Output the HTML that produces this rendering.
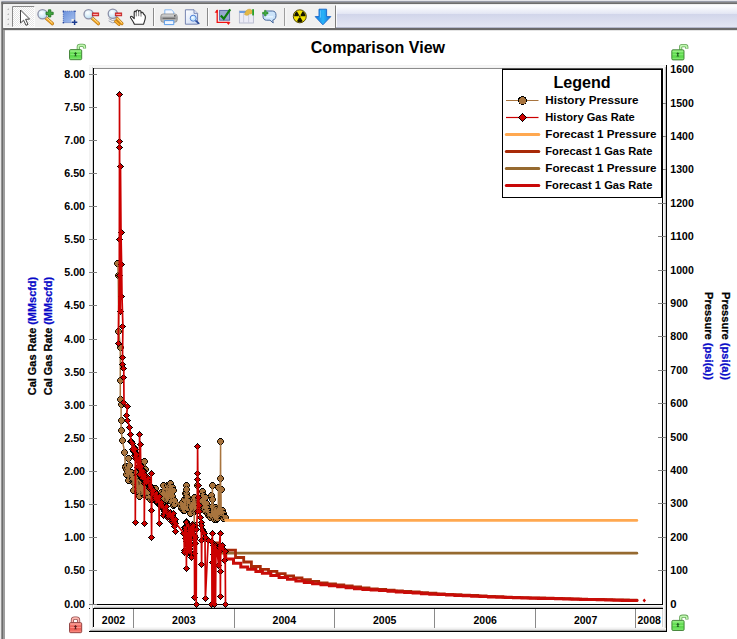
<!DOCTYPE html>
<html><head><meta charset="utf-8"><title>Comparison View</title>
<style>
html,body{margin:0;padding:0;background:#fff;}
body{width:737px;height:639px;overflow:hidden;font-family:"Liberation Sans",sans-serif;}
svg{display:block;position:absolute;left:0;top:0}
text{font-family:"Liberation Sans",sans-serif;font-weight:bold;}
</style></head><body>
<svg width="737" height="639" viewBox="0 0 737 639">
<defs>
<symbol id="mb" width="7" height="7" viewBox="0 0 7 7" shape-rendering="crispEdges">
<path d="M2,0h3v1h1v1h1v3h-1v1h-1v1h-3v-1h-1v-1h-1v-3h1v-1h1z" fill="#A8743E"/>
<path d="M2,0h3v1h-3z M2,6h3v1h-3z M1,1h1v1h-1z M5,1h1v1h-1z M1,5h1v1h-1z M5,5h1v1h-1z M0,3h1v1h-1z M6,3h1v1h-1z" fill="#000"/>
<path d="M0,2h1v1h-1z M0,4h1v1h-1z M6,2h1v1h-1z M6,4h1v1h-1z" fill="#5a3c1c"/>
</symbol>
<symbol id="mr" width="7" height="7" viewBox="0 0 7 7" shape-rendering="crispEdges">
<path d="M3,0h1v1h1v1h1v1h1v1h-1v1h-1v1h-1v1h-1v-1h-1v-1h-1v-1h-1v-1h1v-1h1v-1h1z" fill="#000"/>
<path d="M3,1h1v1h1v1h1v1h-1v1h-1v1h-1v-1h-1v-1h-1v-1h1v-1h1z" fill="#CC0000"/>
</symbol>
<linearGradient id="tbg" x1="0" y1="0" x2="0" y2="1"><stop offset="0" stop-color="#E9ECF6"/><stop offset="1" stop-color="#D3D8EA"/></linearGradient>
<linearGradient id="lockg" x1="0" y1="0" x2="0" y2="1"><stop offset="0" stop-color="#88EC76"/><stop offset="0.5" stop-color="#58D848"/><stop offset="1" stop-color="#6CE05C"/></linearGradient>
<linearGradient id="lockr" x1="0" y1="0" x2="0" y2="1"><stop offset="0" stop-color="#F89088"/><stop offset="0.5" stop-color="#EC5C52"/><stop offset="1" stop-color="#F27268"/></linearGradient>
</defs>
<rect width="737" height="639" fill="#fff"/>
<!-- window chrome -->
<rect x="0" y="0" width="737" height="1" fill="#E4E4E8"/>
<rect x="0" y="1" width="737" height="1.2" fill="#979BA8"/>
<rect x="1.3" y="2.2" width="736" height="2.1" fill="#6C6C6C"/>
<rect x="3.1" y="4.3" width="734" height="1" fill="#FCFCFC"/>
<rect x="4.9" y="5.2" width="733" height="21.8" fill="#F0F0F0"/>
<rect x="336" y="5.2" width="401" height="21.8" fill="url(#tbg)"/>
<rect x="3.1" y="27" width="734" height="1" fill="#FAFAFA"/>
<rect x="336" y="27" width="401" height="1" fill="#B4B8CC"/>
<rect x="3.1" y="28" width="734" height="2" fill="#6A6A6A"/>
<rect x="4.9" y="30" width="733" height="0.7" fill="#d8d8d8"/>
<rect x="0" y="0" width="1.3" height="639" fill="#E8E8E8"/>
<rect x="1.3" y="2" width="1.8" height="637" fill="#6C6C6C"/>
<rect x="3.1" y="30" width="1.8" height="609" fill="#949494"/>
<rect x="3.1" y="5" width="1.8" height="22" fill="#F4F4F4"/>

<defs>
<linearGradient id="tbg2" x1="0" y1="0" x2="0" y2="1"><stop offset="0" stop-color="#ffffff"/><stop offset="0.38" stop-color="#E4E7F4"/><stop offset="0.40" stop-color="#D1D5EA"/><stop offset="1" stop-color="#E3E6F3"/></linearGradient>
<radialGradient id="lens" cx="0.4" cy="0.35" r="0.7"><stop offset="0" stop-color="#ffffff"/><stop offset="0.6" stop-color="#D4ECF8"/><stop offset="1" stop-color="#B4D4F0"/></radialGradient>
<linearGradient id="hnd" x1="0" y1="0" x2="1" y2="0"><stop offset="0" stop-color="#FFE0A0"/><stop offset="1" stop-color="#E89010"/></linearGradient>
<linearGradient id="selg" x1="0" y1="0" x2="1" y2="1"><stop offset="0" stop-color="#6A90DC"/><stop offset="1" stop-color="#A8C2EE"/></linearGradient>
<linearGradient id="arr" x1="0" y1="0" x2="1" y2="0"><stop offset="0" stop-color="#1478E0"/><stop offset="0.5" stop-color="#28B4F8"/><stop offset="1" stop-color="#1070D8"/></linearGradient>
<linearGradient id="prn" x1="0" y1="0" x2="0" y2="1"><stop offset="0" stop-color="#e2e2e2"/><stop offset="0.5" stop-color="#a4a4a4"/><stop offset="1" stop-color="#cacaca"/></linearGradient>
<linearGradient id="pg" x1="0" y1="0" x2="1" y2="1"><stop offset="0" stop-color="#ffffff"/><stop offset="1" stop-color="#C8D8F4"/></linearGradient>
<pattern id="chk" width="2" height="2" patternUnits="userSpaceOnUse"><rect width="2" height="2" fill="#fff"/><rect width="1" height="1" fill="#E4E4E4"/><rect x="1" y="1" width="1" height="1" fill="#E4E4E4"/></pattern>
</defs>
<rect x="336" y="5.2" width="401" height="21.8" fill="url(#tbg2)"/><rect x="336" y="27" width="401" height="1" fill="#B4B8CC"/><rect x="336" y="5.2" width="1" height="21.8" fill="#fff" opacity="0.8"/>
<rect x="335" y="5.5" width="1" height="22.5" fill="#7c7c7c"/>
<!-- grip -->
<g fill="#b8b8b8"><path d="M7,10 l2,-2 v2z M7,15 l2,-2 v2z M7,20 l2,-2 v2z M7,25 l2,-2 v2z"/></g>
<!-- selected cursor button -->
<rect x="12.5" y="6.5" width="22" height="20.5" fill="url(#chk)"/>
<path d="M12.5,27 V6.5 H34.5" stroke="#8a8a8a" stroke-width="1" fill="none"/>
<path d="M34.5,6.5 V27 H12.5" stroke="#fafafa" stroke-width="1" fill="none"/>
<path d="M20.5,10 V23 L23.6,20.2 L26,25.3 L28,24.4 L25.6,19.3 L29.6,19.1 Z" fill="#fff" stroke="#3a3a3a" stroke-width="0.95" stroke-linejoin="miter"/>
<!-- zoom in -->
<g>
<path d="M46,18 L52.3,23.6" stroke="#B87410" stroke-width="3.4" stroke-linecap="round"/>
<path d="M46,18 L52.3,23.6" stroke="#F8B030" stroke-width="2" stroke-linecap="round"/>
<path d="M46.6,17.8 L52,22.6" stroke="#FFE8B0" stroke-width="0.8" stroke-linecap="round"/>
<circle cx="42.5" cy="14.3" r="4.6" fill="url(#lens)" stroke="#8C90A8" stroke-width="1.3"/>
<path d="M48.4,9.8 h2.4 v2.4 h2.4 v2.4 h-2.4 v2.4 h-2.4 v-2.4 h-2.4 v-2.4 h2.4z" fill="#3FA83F" stroke="#1C6E1C" stroke-width="0.8"/>
</g>
<!-- rect select -->
<g>
<path d="M63.3,11.2 H75 V19 H71.5 V22.6 H63.3 Z" fill="url(#selg)"/>
<path d="M63.3,11.2 H75 V19 M71.5,22.6 H63.3 V11.2" fill="none" stroke="#3458B0" stroke-width="0.9" stroke-dasharray="1 1"/>
<g fill="#2848A0"><rect x="62.7" y="10.6" width="1.4" height="1.4"/><rect x="74.3" y="10.6" width="1.4" height="1.4"/><rect x="62.7" y="22" width="1.4" height="1.4"/></g>
<path d="M74.6,19.6 V25 M71.9,22.3 H77.3" stroke="#1C3C90" stroke-width="1.5" fill="none"/>
</g>
<!-- zoom out -->
<g>
<path d="M92,18 L98.3,23.6" stroke="#B87410" stroke-width="3.4" stroke-linecap="round"/>
<path d="M92,18 L98.3,23.6" stroke="#F8B030" stroke-width="2" stroke-linecap="round"/>
<path d="M92.6,17.8 L98,22.6" stroke="#FFE8B0" stroke-width="0.8" stroke-linecap="round"/>
<circle cx="88.6" cy="14.2" r="4.6" fill="url(#lens)" stroke="#8C90A8" stroke-width="1.3"/>
<rect x="92.2" y="12.9" width="6.6" height="3" fill="#E83838" stroke="#B01818" stroke-width="0.6"/>
<rect x="93.2" y="14" width="4.6" height="0.8" fill="#FFD0D0"/>
</g>
<!-- zoom layers -->
<g>
<path d="M108.6,18.5 q3.6,3.4 8,1.2 M108.6,20.8 q3.6,3.4 8,1.2" stroke="#A0A4B4" stroke-width="1" fill="none"/>
<path d="M117,18.4 L122,23.6 M115.6,21.4 L119,24.4" stroke="#B87410" stroke-width="3" stroke-linecap="round"/>
<path d="M117,18.4 L122,23.6 M115.6,21.4 L119,24.4" stroke="#F8B030" stroke-width="1.8" stroke-linecap="round"/>
<path d="M117.5,18.2 L121.8,22.8" stroke="#FFE8B0" stroke-width="0.7" stroke-linecap="round"/>
<circle cx="112.8" cy="13.8" r="4.6" fill="url(#lens)" stroke="#8C90A8" stroke-width="1.3"/>
<rect x="115.2" y="12.9" width="6.6" height="3" fill="#E83838" stroke="#B01818" stroke-width="0.6"/>
<rect x="116.2" y="14" width="4.6" height="0.8" fill="#FFD0D0"/>
</g>
<!-- hand -->
<path d="M134.4,24.2 C133.4,21.6 131.6,19.6 130.6,17.8 C130,16.6 131.2,15.8 132.2,16.6 L134.2,18.6 V12.2 C134.2,10.8 136,10.8 136.2,12.2 V11 C136.4,9.6 138.4,9.6 138.6,11 V11.6 C138.8,10.2 140.8,10.2 141,11.8 V13 C141.4,11.8 143.2,12 143.2,13.6 C143.6,14.4 145.4,14.6 145.4,17 C145.4,20 144.2,21.6 143.6,24.2 Z" fill="#fff" stroke="#2a2a2a" stroke-width="1.1" stroke-linejoin="round"/>
<path d="M136.3,12.4 V16.4 M138.7,11.4 V16.2 M141,12.6 V16.6" stroke="#555" stroke-width="0.8" fill="none"/>
<!-- separators -->
<g fill="#8a8a8a"><rect x="153" y="8" width="1" height="18"/><rect x="207" y="8" width="1" height="18"/><rect x="284.2" y="8" width="1" height="18"/></g>
<g fill="#fdfdfd"><rect x="154" y="8" width="1" height="18"/><rect x="208" y="8" width="1" height="18"/><rect x="285.2" y="8" width="1" height="18"/></g>
<!-- printer -->
<g>
<path d="M164.8,14.5 V9.8 H171.4 L173.8,12 V14.5 Z" fill="#F4F8FF" stroke="#6CA8EC" stroke-width="0.8"/>
<rect x="160.8" y="14" width="16.4" height="8.2" rx="2.4" fill="url(#prn)" stroke="#808080" stroke-width="0.8"/>
<rect x="162.6" y="17.6" width="12.8" height="1.5" fill="#6e6e6e"/>
<rect x="174.2" y="15.2" width="1.3" height="1.3" fill="#222"/>
<path d="M164.4,20.6 H173.8 V24.6 H164.4 Z" fill="#F0F6FF" stroke="#4C94E8" stroke-width="0.9"/>
</g>
<!-- preview -->
<g>
<path d="M185.4,9.8 H194 L197.6,13.4 V24.2 H185.4 Z" fill="url(#pg)" stroke="#6878A8" stroke-width="0.9"/>
<path d="M194,9.8 V13.4 H197.6" fill="#E0E8F8" stroke="#6878A8" stroke-width="0.8"/>
<path d="M195.6,20.6 L198.8,23.4" stroke="#2C4C9C" stroke-width="1.6" stroke-linecap="round"/>
<circle cx="193.2" cy="18.2" r="3" fill="#C8E8FE" stroke="#5080D4" stroke-width="1"/>
<circle cx="192.6" cy="17.6" r="1.2" fill="#fff" opacity="0.8"/>
</g>
<!-- check chart -->
<g>
<rect x="219.6" y="10.4" width="10" height="9.8" fill="#98A8D0" stroke="#5464A4" stroke-width="0.9"/>
<path d="M217.2,10 V22.4 H229.4" stroke="#F01010" stroke-width="1.3" fill="none"/>
<path d="M215.2,12.4 L217.2,9.8 V12.4 Z M226.8,22.4 H230 L228.4,24.6 Z" fill="#F01010" stroke="#F01010" stroke-width="0.6"/>
<path d="M220.8,15.4 L223.8,18.8 L230.2,9.4" stroke="#0C7C0C" stroke-width="2.2" fill="none"/>
</g>
<!-- chart window -->
<g>
<rect x="239.4" y="11" width="14" height="12" fill="#ECECF6" stroke="#B4B8CC" stroke-width="0.9"/>
<rect x="239.4" y="11" width="7" height="2" fill="#6C9CE0"/>
<path d="M243.6,13 V23 M248.6,13 V23" stroke="#CACCDC" stroke-width="0.9"/>
<path d="M244.6,14.6 C245,11.6 246.6,9.4 249,9.2 C251,9 252.4,10.2 252.4,12 C252.4,13.6 251,14.2 249.6,13.8 C248.6,15.4 246.4,15.8 244.6,14.6Z" fill="#E4B848" stroke="#C89828" stroke-width="0.5"/>
<rect x="252.2" y="9.2" width="1.8" height="6.2" fill="#28A028"/>
</g>
<!-- comment -->
<g>
<path d="M266.6,11 H272.4 C274.8,11 276,12.6 276,15.4 C276,18.2 274.8,19.8 272.8,20 L273.2,23 L270,20.2 H266.4 C264.2,20.2 263,18.6 263,16 V14 Z" fill="#CCE4FA" stroke="#4A6A9C" stroke-width="1"/>
<path d="M266,16.8 H273" stroke="#E8F4FF" stroke-width="1.4"/>
<path d="M264.5,10.4 h1.6 v1.9 h1.9 v1.6 h-1.9 v1.9 h-1.6 v-1.9 h-1.9 v-1.6 h1.9z" fill="#44B044" stroke="#1C7C1C" stroke-width="0.6"/>
</g>
<!-- radiation -->
<g>
<circle cx="299.8" cy="16.3" r="6.5" fill="#F4E400" stroke="#54480C" stroke-width="1"/>
<g fill="#141400">
<path d="M299.8,16.3 L302.7,11.28 A5.8,5.8 0 0 1 305.6,16.3 Z"/>
<path d="M299.8,16.3 L302.7,21.32 A5.8,5.8 0 0 1 296.9,21.32 Z"/>
<path d="M299.8,16.3 L294,16.3 A5.8,5.8 0 0 1 296.9,11.28 Z"/>
</g>
<circle cx="299.8" cy="16.3" r="1.3" fill="#F4E400"/>
<circle cx="299.8" cy="16.3" r="0.7" fill="#141400"/>
</g>
<!-- down arrow -->
<path d="M319,9.2 H326.6 V16.6 H330.8 L322.9,24.8 L315.2,16.6 H319 Z" fill="url(#arr)" stroke="#1464C8" stroke-width="0.9" stroke-linejoin="round"/>
<path d="M320.4,10.4 V17.6" stroke="#70D0FF" stroke-width="1" opacity="0.8"/>

<g transform="translate(69.1,49.2)">
<path d="M9.2,0.3 V-2.2 C9.2,-3.3 10,-3.8 11,-3.8 H13.7 C14.9,-3.8 15.4,-3.2 15.4,-2.1 V-0.6" fill="none" stroke="#64A458" stroke-width="3.2" stroke-linejoin="round"/>
<path d="M9.2,0.3 V-2.2 C9.2,-3.3 10,-3.8 11,-3.8 H13.7 C14.9,-3.8 15.4,-3.2 15.4,-2.1 V-1" fill="none" stroke="#C0F8B0" stroke-width="1.6" stroke-linejoin="round"/>
<rect x="0.4" y="0.4" width="12.2" height="10.1" rx="1.2" fill="url(#lockg)" stroke="#3C7C32" stroke-width="0.9"/>
<rect x="1.2" y="1.4" width="10.6" height="1" fill="#A4F494" opacity="0.8"/>
<rect x="1.2" y="4.9" width="10.6" height="0.9" fill="#98F088" opacity="0.8"/>
<rect x="1.2" y="8.6" width="10.6" height="0.9" fill="#8CEC7C" opacity="0.7"/>
<path d="M6.4,2.8 L8.1,4.7 H7 V6.2 L7.9,7 H4.9 L5.8,6.2 V4.7 H4.7 Z" fill="#1E5A1E"/>
</g>
<g transform="translate(671.4,49.4)">
<path d="M9.2,0.3 V-2.2 C9.2,-3.3 10,-3.8 11,-3.8 H13.7 C14.9,-3.8 15.4,-3.2 15.4,-2.1 V-0.6" fill="none" stroke="#64A458" stroke-width="3.2" stroke-linejoin="round"/>
<path d="M9.2,0.3 V-2.2 C9.2,-3.3 10,-3.8 11,-3.8 H13.7 C14.9,-3.8 15.4,-3.2 15.4,-2.1 V-1" fill="none" stroke="#C0F8B0" stroke-width="1.6" stroke-linejoin="round"/>
<rect x="0.4" y="0.4" width="12.2" height="10.1" rx="1.2" fill="url(#lockg)" stroke="#3C7C32" stroke-width="0.9"/>
<rect x="1.2" y="1.4" width="10.6" height="1" fill="#A4F494" opacity="0.8"/>
<rect x="1.2" y="4.9" width="10.6" height="0.9" fill="#98F088" opacity="0.8"/>
<rect x="1.2" y="8.6" width="10.6" height="0.9" fill="#8CEC7C" opacity="0.7"/>
<path d="M6.4,2.8 L8.1,4.7 H7 V6.2 L7.9,7 H4.9 L5.8,6.2 V4.7 H4.7 Z" fill="#1E5A1E"/>
</g>
<g transform="translate(671.5,620)">
<path d="M9.2,0.3 V-2.2 C9.2,-3.3 10,-3.8 11,-3.8 H13.7 C14.9,-3.8 15.4,-3.2 15.4,-2.1 V-0.6" fill="none" stroke="#64A458" stroke-width="3.2" stroke-linejoin="round"/>
<path d="M9.2,0.3 V-2.2 C9.2,-3.3 10,-3.8 11,-3.8 H13.7 C14.9,-3.8 15.4,-3.2 15.4,-2.1 V-1" fill="none" stroke="#C0F8B0" stroke-width="1.6" stroke-linejoin="round"/>
<rect x="0.4" y="0.4" width="12.2" height="10.1" rx="1.2" fill="url(#lockg)" stroke="#3C7C32" stroke-width="0.9"/>
<rect x="1.2" y="1.4" width="10.6" height="1" fill="#A4F494" opacity="0.8"/>
<rect x="1.2" y="4.9" width="10.6" height="0.9" fill="#98F088" opacity="0.8"/>
<rect x="1.2" y="8.6" width="10.6" height="0.9" fill="#8CEC7C" opacity="0.7"/>
<path d="M6.4,2.8 L8.1,4.7 H7 V6.2 L7.9,7 H4.9 L5.8,6.2 V4.7 H4.7 Z" fill="#1E5A1E"/>
</g>
<g transform="translate(69.1,622.2)">
<path d="M3.3,0.4 V-2 C3.3,-3.6 4.2,-4.1 5.4,-4.1 H7.4 C8.6,-4.1 9.5,-3.6 9.5,-2 V0.4" fill="none" stroke="#945050" stroke-width="3.2" stroke-linejoin="round"/>
<path d="M3.3,0.4 V-2 C3.3,-3.6 4.2,-4.1 5.4,-4.1 H7.4 C8.6,-4.1 9.5,-3.6 9.5,-2 V0.4" fill="none" stroke="#FFB8B0" stroke-width="1.6" stroke-linejoin="round"/>
<rect x="0.4" y="0.4" width="12.2" height="10.1" rx="1.2" fill="url(#lockr)" stroke="#8A3C3C" stroke-width="0.9"/>
<rect x="1.2" y="1.4" width="10.6" height="1" fill="#FFB0A8" opacity="0.8"/>
<rect x="1.2" y="4.9" width="10.6" height="0.9" fill="#FFA49C" opacity="0.8"/>
<rect x="1.2" y="8.6" width="10.6" height="0.9" fill="#FF9C94" opacity="0.7"/>
<path d="M6.4,2.8 L8.1,4.7 H7 V6.2 L7.9,7 H4.9 L5.8,6.2 V4.7 H4.7 Z" fill="#5A1E1E"/>
</g>
<text x="377.9" y="52.5" font-size="15.8" text-anchor="middle" fill="#000" textLength="134.3" lengthAdjust="spacingAndGlyphs">Comparison View</text>
<rect x="89" y="65" width="1" height="566" fill="#F2F2F2"/><rect x="90" y="65" width="1" height="566" fill="#F6F6F6"/><rect x="91" y="65" width="1" height="566" fill="#FAFAFA"/><rect x="92" y="65" width="1" height="563" fill="#D0D0D0"/>
<rect x="89" y="65" width="577" height="1" fill="#F3F3F3"/><rect x="89" y="66" width="577" height="1" fill="#F7F7F7"/><rect x="94" y="67" width="568" height="1" fill="#F2F2F2"/>
<rect x="663" y="67" width="1" height="563" fill="#FCFCFC"/><rect x="664" y="67" width="1" height="563" fill="#EEEEEE"/><rect x="665" y="67" width="1" height="563" fill="#C4C4C4"/>
<rect x="94" y="605" width="569" height="1" fill="#F6F6F6"/><rect x="94" y="606" width="569" height="1" fill="#E6E6E6"/><rect x="94" y="607" width="569" height="1" fill="#B4B4B4"/>
<rect x="93" y="68" width="570" height="1" fill="#8c8c8c"/>
<rect x="93" y="68" width="1" height="537" fill="#000"/>
<rect x="93" y="604" width="570" height="1" fill="#000"/>
<rect x="662" y="68" width="1" height="537" fill="#000"/>
<rect x="666" y="65" width="1" height="567" fill="#000"/>
<rect x="89" y="604" width="8" height="1" fill="#808080"/>
<text x="85.1" y="608.1" font-size="11.3" text-anchor="end" fill="#000" textLength="20.9" lengthAdjust="spacingAndGlyphs">0.00</text>
<rect x="89" y="570" width="8" height="1" fill="#808080"/>
<text x="85.1" y="574.1" font-size="11.3" text-anchor="end" fill="#000" textLength="20.9" lengthAdjust="spacingAndGlyphs">0.50</text>
<rect x="89" y="537" width="8" height="1" fill="#808080"/>
<text x="85.1" y="541.1" font-size="11.3" text-anchor="end" fill="#000" textLength="20.9" lengthAdjust="spacingAndGlyphs">1.00</text>
<rect x="89" y="504" width="8" height="1" fill="#808080"/>
<text x="85.1" y="508.1" font-size="11.3" text-anchor="end" fill="#000" textLength="20.9" lengthAdjust="spacingAndGlyphs">1.50</text>
<rect x="89" y="471" width="8" height="1" fill="#808080"/>
<text x="85.1" y="475.1" font-size="11.3" text-anchor="end" fill="#000" textLength="20.9" lengthAdjust="spacingAndGlyphs">2.00</text>
<rect x="89" y="438" width="8" height="1" fill="#808080"/>
<text x="85.1" y="442.1" font-size="11.3" text-anchor="end" fill="#000" textLength="20.9" lengthAdjust="spacingAndGlyphs">2.50</text>
<rect x="89" y="405" width="8" height="1" fill="#808080"/>
<text x="85.1" y="409.1" font-size="11.3" text-anchor="end" fill="#000" textLength="20.9" lengthAdjust="spacingAndGlyphs">3.00</text>
<rect x="89" y="372" width="8" height="1" fill="#808080"/>
<text x="85.1" y="376.1" font-size="11.3" text-anchor="end" fill="#000" textLength="20.9" lengthAdjust="spacingAndGlyphs">3.50</text>
<rect x="89" y="339" width="8" height="1" fill="#808080"/>
<text x="85.1" y="343.1" font-size="11.3" text-anchor="end" fill="#000" textLength="20.9" lengthAdjust="spacingAndGlyphs">4.00</text>
<rect x="89" y="305" width="8" height="1" fill="#808080"/>
<text x="85.1" y="309.1" font-size="11.3" text-anchor="end" fill="#000" textLength="20.9" lengthAdjust="spacingAndGlyphs">4.50</text>
<rect x="89" y="272" width="8" height="1" fill="#808080"/>
<text x="85.1" y="276.1" font-size="11.3" text-anchor="end" fill="#000" textLength="20.9" lengthAdjust="spacingAndGlyphs">5.00</text>
<rect x="89" y="239" width="8" height="1" fill="#808080"/>
<text x="85.1" y="243.1" font-size="11.3" text-anchor="end" fill="#000" textLength="20.9" lengthAdjust="spacingAndGlyphs">5.50</text>
<rect x="89" y="206" width="8" height="1" fill="#808080"/>
<text x="85.1" y="210.1" font-size="11.3" text-anchor="end" fill="#000" textLength="20.9" lengthAdjust="spacingAndGlyphs">6.00</text>
<rect x="89" y="173" width="8" height="1" fill="#808080"/>
<text x="85.1" y="177.1" font-size="11.3" text-anchor="end" fill="#000" textLength="20.9" lengthAdjust="spacingAndGlyphs">6.50</text>
<rect x="89" y="140" width="8" height="1" fill="#808080"/>
<text x="85.1" y="144.1" font-size="11.3" text-anchor="end" fill="#000" textLength="20.9" lengthAdjust="spacingAndGlyphs">7.00</text>
<rect x="89" y="107" width="8" height="1" fill="#808080"/>
<text x="85.1" y="111.1" font-size="11.3" text-anchor="end" fill="#000" textLength="20.9" lengthAdjust="spacingAndGlyphs">7.50</text>
<rect x="89" y="74" width="8" height="1" fill="#808080"/>
<text x="85.1" y="78.1" font-size="11.3" text-anchor="end" fill="#000" textLength="20.9" lengthAdjust="spacingAndGlyphs">8.00</text>
<text x="670.3" y="608.1" font-size="11.3" text-anchor="start" fill="#000">0</text>
<rect x="658" y="570" width="8" height="1" fill="#808080"/>
<text x="670.3" y="574.1" font-size="11.3" text-anchor="start" fill="#000" textLength="17.6" lengthAdjust="spacingAndGlyphs">100</text>
<rect x="658" y="537" width="8" height="1" fill="#808080"/>
<text x="670.3" y="541.1" font-size="11.3" text-anchor="start" fill="#000" textLength="17.6" lengthAdjust="spacingAndGlyphs">200</text>
<rect x="658" y="503" width="8" height="1" fill="#808080"/>
<text x="670.3" y="507.1" font-size="11.3" text-anchor="start" fill="#000" textLength="17.6" lengthAdjust="spacingAndGlyphs">300</text>
<rect x="658" y="470" width="8" height="1" fill="#808080"/>
<text x="670.3" y="474.1" font-size="11.3" text-anchor="start" fill="#000" textLength="17.6" lengthAdjust="spacingAndGlyphs">400</text>
<rect x="658" y="437" width="8" height="1" fill="#808080"/>
<text x="670.3" y="441.1" font-size="11.3" text-anchor="start" fill="#000" textLength="17.6" lengthAdjust="spacingAndGlyphs">500</text>
<rect x="658" y="403" width="8" height="1" fill="#808080"/>
<text x="670.3" y="407.1" font-size="11.3" text-anchor="start" fill="#000" textLength="17.6" lengthAdjust="spacingAndGlyphs">600</text>
<rect x="658" y="370" width="8" height="1" fill="#808080"/>
<text x="670.3" y="374.1" font-size="11.3" text-anchor="start" fill="#000" textLength="17.6" lengthAdjust="spacingAndGlyphs">700</text>
<rect x="658" y="336" width="8" height="1" fill="#808080"/>
<text x="670.3" y="340.1" font-size="11.3" text-anchor="start" fill="#000" textLength="17.6" lengthAdjust="spacingAndGlyphs">800</text>
<rect x="658" y="303" width="8" height="1" fill="#808080"/>
<text x="670.3" y="307.1" font-size="11.3" text-anchor="start" fill="#000" textLength="17.6" lengthAdjust="spacingAndGlyphs">900</text>
<rect x="658" y="270" width="8" height="1" fill="#808080"/>
<text x="670.3" y="274.1" font-size="11.3" text-anchor="start" fill="#000" textLength="23.5" lengthAdjust="spacingAndGlyphs">1000</text>
<rect x="658" y="236" width="8" height="1" fill="#808080"/>
<text x="670.3" y="240.1" font-size="11.3" text-anchor="start" fill="#000" textLength="23.5" lengthAdjust="spacingAndGlyphs">1100</text>
<rect x="658" y="203" width="8" height="1" fill="#808080"/>
<text x="670.3" y="207.1" font-size="11.3" text-anchor="start" fill="#000" textLength="23.5" lengthAdjust="spacingAndGlyphs">1200</text>
<rect x="658" y="169" width="8" height="1" fill="#808080"/>
<text x="670.3" y="173.1" font-size="11.3" text-anchor="start" fill="#000" textLength="23.5" lengthAdjust="spacingAndGlyphs">1300</text>
<rect x="658" y="136" width="8" height="1" fill="#808080"/>
<text x="670.3" y="140.1" font-size="11.3" text-anchor="start" fill="#000" textLength="23.5" lengthAdjust="spacingAndGlyphs">1400</text>
<rect x="658" y="103" width="8" height="1" fill="#808080"/>
<text x="670.3" y="107.1" font-size="11.3" text-anchor="start" fill="#000" textLength="23.5" lengthAdjust="spacingAndGlyphs">1500</text>
<text x="670.3" y="73.1" font-size="11.3" text-anchor="start" fill="#000" textLength="23.5" lengthAdjust="spacingAndGlyphs">1600</text>
<rect x="93" y="608" width="570" height="1" fill="#000"/>
<rect x="93" y="608" width="1" height="19" fill="#000"/>
<rect x="89" y="608" width="1" height="1" fill="#000"/>
<rect x="662" y="609" width="1" height="19" fill="#D2D2D2"/>
<rect x="94" y="627" width="569" height="1" fill="#F8F8F8"/><rect x="92" y="628" width="574" height="1" fill="#F2F2F2"/><rect x="91" y="629" width="575" height="1" fill="#E2E2E2"/><rect x="90" y="630" width="576" height="1" fill="#A8A8A8"/>
<rect x="89" y="631" width="578" height="1" fill="#000"/>
<rect x="133" y="609" width="1" height="19" fill="#8a8a8a"/>
<rect x="234" y="609" width="1" height="19" fill="#8a8a8a"/>
<rect x="334" y="609" width="1" height="19" fill="#8a8a8a"/>
<rect x="434" y="609" width="1" height="19" fill="#8a8a8a"/>
<rect x="535" y="609" width="1" height="19" fill="#8a8a8a"/>
<rect x="635" y="609" width="1" height="19" fill="#8a8a8a"/>
<text x="113.5" y="623.6" font-size="11.3" text-anchor="middle" fill="#000" textLength="23.4" lengthAdjust="spacingAndGlyphs">2002</text>
<text x="183.8" y="623.6" font-size="11.3" text-anchor="middle" fill="#000" textLength="23.4" lengthAdjust="spacingAndGlyphs">2003</text>
<text x="284.3" y="623.6" font-size="11.3" text-anchor="middle" fill="#000" textLength="23.4" lengthAdjust="spacingAndGlyphs">2004</text>
<text x="384.7" y="623.6" font-size="11.3" text-anchor="middle" fill="#000" textLength="23.4" lengthAdjust="spacingAndGlyphs">2005</text>
<text x="485.2" y="623.6" font-size="11.3" text-anchor="middle" fill="#000" textLength="23.4" lengthAdjust="spacingAndGlyphs">2006</text>
<text x="585.6" y="623.6" font-size="11.3" text-anchor="middle" fill="#000" textLength="23.4" lengthAdjust="spacingAndGlyphs">2007</text>
<text x="649.2" y="623.6" font-size="11.3" text-anchor="middle" fill="#000" textLength="23.4" lengthAdjust="spacingAndGlyphs">2008</text>
<text transform="translate(36,336) rotate(-90)" font-size="11" text-anchor="middle" textLength="118.4" lengthAdjust="spacingAndGlyphs" stroke-width="0.25"><tspan fill="#000" stroke="#000">Cal Gas Rate </tspan><tspan fill="#0808C8" stroke="#0808C8">(MMscfd)</tspan></text>
<text transform="translate(52,336) rotate(-90)" font-size="11" text-anchor="middle" textLength="118.4" lengthAdjust="spacingAndGlyphs" stroke-width="0.25"><tspan fill="#000" stroke="#000">Cal Gas Rate </tspan><tspan fill="#0808C8" stroke="#0808C8">(MMscfd)</tspan></text>
<text transform="translate(705.3,336) rotate(90)" font-size="11" text-anchor="middle" textLength="88" lengthAdjust="spacingAndGlyphs" stroke-width="0.25"><tspan fill="#000" stroke="#000">Pressure </tspan><tspan fill="#0808C8" stroke="#0808C8">(psi(a))</tspan></text>
<text transform="translate(722.3,336) rotate(90)" font-size="11" text-anchor="middle" textLength="88" lengthAdjust="spacingAndGlyphs" stroke-width="0.25"><tspan fill="#000" stroke="#000">Pressure </tspan><tspan fill="#0808C8" stroke="#0808C8">(psi(a))</tspan></text>
<svg x="0" y="0" width="737" height="639" viewBox="0 0 737 639"><clipPath id="pc"><rect x="90" y="66" width="577" height="543"/></clipPath><g clip-path="url(#pc)">
<use href="#mb" x="114" y="260"/>
<use href="#mb" x="115" y="272"/>
<use href="#mb" x="115" y="328"/>
<use href="#mb" x="117" y="344"/>
<use href="#mb" x="117" y="377"/>
<use href="#mb" x="117" y="396"/>
<use href="#mb" x="118" y="401"/>
<use href="#mb" x="118" y="417"/>
<use href="#mb" x="118" y="427"/>
<use href="#mb" x="119" y="437"/>
<use href="#mb" x="121" y="449"/>
<use href="#mb" x="122" y="463"/>
<use href="#mb" x="122" y="464"/>
<use href="#mb" x="123" y="466"/>
<use href="#mb" x="123" y="471"/>
<use href="#mb" x="124" y="464"/>
<use href="#mb" x="124" y="468"/>
<use href="#mb" x="125" y="477"/>
<use href="#mb" x="125" y="455"/>
<use href="#mb" x="126" y="462"/>
<use href="#mb" x="126" y="470"/>
<use href="#mb" x="127" y="472"/>
<use href="#mb" x="127" y="471"/>
<use href="#mb" x="128" y="469"/>
<use href="#mb" x="128" y="476"/>
<use href="#mb" x="129" y="475"/>
<use href="#mb" x="129" y="472"/>
<use href="#mb" x="130" y="487"/>
<use href="#mb" x="130" y="479"/>
<use href="#mb" x="131" y="475"/>
<use href="#mb" x="131" y="478"/>
<use href="#mb" x="132" y="478"/>
<use href="#mb" x="132" y="480"/>
<use href="#mb" x="133" y="469"/>
<use href="#mb" x="133" y="479"/>
<use href="#mb" x="134" y="488"/>
<use href="#mb" x="134" y="476"/>
<use href="#mb" x="135" y="483"/>
<use href="#mb" x="135" y="489"/>
<use href="#mb" x="136" y="489"/>
<use href="#mb" x="136" y="493"/>
<use href="#mb" x="137" y="476"/>
<use href="#mb" x="137" y="483"/>
<use href="#mb" x="138" y="483"/>
<use href="#mb" x="138" y="488"/>
<use href="#mb" x="139" y="490"/>
<use href="#mb" x="139" y="475"/>
<use href="#mb" x="140" y="490"/>
<use href="#mb" x="140" y="478"/>
<use href="#mb" x="140" y="464"/>
<use href="#mb" x="141" y="489"/>
<use href="#mb" x="141" y="478"/>
<use href="#mb" x="141" y="458"/>
<use href="#mb" x="142" y="486"/>
<use href="#mb" x="142" y="466"/>
<use href="#mb" x="142" y="492"/>
<use href="#mb" x="143" y="485"/>
<use href="#mb" x="143" y="487"/>
<use href="#mb" x="144" y="490"/>
<use href="#mb" x="144" y="487"/>
<use href="#mb" x="145" y="486"/>
<use href="#mb" x="145" y="494"/>
<use href="#mb" x="146" y="490"/>
<use href="#mb" x="146" y="487"/>
<use href="#mb" x="147" y="496"/>
<use href="#mb" x="147" y="487"/>
<use href="#mb" x="148" y="494"/>
<use href="#mb" x="148" y="492"/>
<use href="#mb" x="149" y="494"/>
<use href="#mb" x="149" y="496"/>
<use href="#mb" x="150" y="495"/>
<use href="#mb" x="150" y="496"/>
<use href="#mb" x="151" y="489"/>
<use href="#mb" x="151" y="490"/>
<use href="#mb" x="152" y="496"/>
<use href="#mb" x="152" y="485"/>
<use href="#mb" x="152" y="492"/>
<use href="#mb" x="153" y="492"/>
<use href="#mb" x="153" y="490"/>
<use href="#mb" x="154" y="499"/>
<use href="#mb" x="154" y="497"/>
<use href="#mb" x="155" y="500"/>
<use href="#mb" x="155" y="492"/>
<use href="#mb" x="156" y="495"/>
<use href="#mb" x="156" y="492"/>
<use href="#mb" x="157" y="498"/>
<use href="#mb" x="157" y="500"/>
<use href="#mb" x="158" y="489"/>
<use href="#mb" x="158" y="501"/>
<use href="#mb" x="159" y="497"/>
<use href="#mb" x="159" y="491"/>
<use href="#mb" x="160" y="482"/>
<use href="#mb" x="160" y="498"/>
<use href="#mb" x="161" y="491"/>
<use href="#mb" x="161" y="488"/>
<use href="#mb" x="162" y="492"/>
<use href="#mb" x="162" y="492"/>
<use href="#mb" x="163" y="497"/>
<use href="#mb" x="163" y="485"/>
<use href="#mb" x="164" y="482"/>
<use href="#mb" x="164" y="495"/>
<use href="#mb" x="164" y="497"/>
<use href="#mb" x="165" y="496"/>
<use href="#mb" x="165" y="488"/>
<use href="#mb" x="166" y="485"/>
<use href="#mb" x="166" y="481"/>
<use href="#mb" x="166" y="494"/>
<use href="#mb" x="167" y="490"/>
<use href="#mb" x="167" y="480"/>
<use href="#mb" x="167" y="491"/>
<use href="#mb" x="168" y="498"/>
<use href="#mb" x="168" y="492"/>
<use href="#mb" x="169" y="484"/>
<use href="#mb" x="169" y="493"/>
<use href="#mb" x="170" y="487"/>
<use href="#mb" x="170" y="502"/>
<use href="#mb" x="171" y="501"/>
<use href="#mb" x="171" y="497"/>
<use href="#mb" x="177" y="502"/>
<use href="#mb" x="178" y="505"/>
<use href="#mb" x="178" y="500"/>
<use href="#mb" x="179" y="506"/>
<use href="#mb" x="179" y="499"/>
<use href="#mb" x="180" y="505"/>
<use href="#mb" x="180" y="507"/>
<use href="#mb" x="181" y="507"/>
<use href="#mb" x="181" y="496"/>
<use href="#mb" x="182" y="504"/>
<use href="#mb" x="182" y="490"/>
<use href="#mb" x="183" y="494"/>
<use href="#mb" x="183" y="482"/>
<use href="#mb" x="183" y="490"/>
<use href="#mb" x="183" y="486"/>
<use href="#mb" x="184" y="505"/>
<use href="#mb" x="184" y="494"/>
<use href="#mb" x="185" y="500"/>
<use href="#mb" x="185" y="499"/>
<use href="#mb" x="186" y="500"/>
<use href="#mb" x="186" y="498"/>
<use href="#mb" x="187" y="502"/>
<use href="#mb" x="187" y="510"/>
<use href="#mb" x="188" y="501"/>
<use href="#mb" x="188" y="504"/>
<use href="#mb" x="189" y="506"/>
<use href="#mb" x="189" y="501"/>
<use href="#mb" x="190" y="496"/>
<use href="#mb" x="190" y="500"/>
<use href="#mb" x="191" y="508"/>
<use href="#mb" x="191" y="522"/>
<use href="#mb" x="191" y="494"/>
<use href="#mb" x="192" y="500"/>
<use href="#mb" x="192" y="507"/>
<use href="#mb" x="193" y="506"/>
<use href="#mb" x="193" y="502"/>
<use href="#mb" x="194" y="506"/>
<use href="#mb" x="194" y="482"/>
<use href="#mb" x="194" y="503"/>
<use href="#mb" x="195" y="497"/>
<use href="#mb" x="195" y="495"/>
<use href="#mb" x="196" y="499"/>
<use href="#mb" x="196" y="507"/>
<use href="#mb" x="197" y="499"/>
<use href="#mb" x="197" y="497"/>
<use href="#mb" x="198" y="498"/>
<use href="#mb" x="198" y="494"/>
<use href="#mb" x="199" y="501"/>
<use href="#mb" x="199" y="488"/>
<use href="#mb" x="199" y="496"/>
<use href="#mb" x="200" y="504"/>
<use href="#mb" x="200" y="492"/>
<use href="#mb" x="201" y="505"/>
<use href="#mb" x="201" y="500"/>
<use href="#mb" x="202" y="494"/>
<use href="#mb" x="202" y="508"/>
<use href="#mb" x="203" y="504"/>
<use href="#mb" x="203" y="500"/>
<use href="#mb" x="204" y="505"/>
<use href="#mb" x="204" y="510"/>
<use href="#mb" x="205" y="508"/>
<use href="#mb" x="205" y="512"/>
<use href="#mb" x="206" y="512"/>
<use href="#mb" x="206" y="512"/>
<use href="#mb" x="207" y="510"/>
<use href="#mb" x="207" y="514"/>
<use href="#mb" x="208" y="512"/>
<use href="#mb" x="208" y="511"/>
<use href="#mb" x="208" y="492"/>
<use href="#mb" x="209" y="503"/>
<use href="#mb" x="209" y="482"/>
<use href="#mb" x="209" y="512"/>
<use href="#mb" x="209" y="496"/>
<use href="#mb" x="210" y="514"/>
<use href="#mb" x="210" y="509"/>
<use href="#mb" x="211" y="508"/>
<use href="#mb" x="211" y="516"/>
<use href="#mb" x="212" y="504"/>
<use href="#mb" x="212" y="511"/>
<use href="#mb" x="213" y="516"/>
<use href="#mb" x="213" y="506"/>
<use href="#mb" x="214" y="511"/>
<use href="#mb" x="214" y="515"/>
<use href="#mb" x="215" y="508"/>
<use href="#mb" x="215" y="484"/>
<use href="#mb" x="215" y="510"/>
<use href="#mb" x="216" y="512"/>
<use href="#mb" x="216" y="506"/>
<use href="#mb" x="217" y="475"/>
<use href="#mb" x="217" y="508"/>
<use href="#mb" x="217" y="438"/>
<use href="#mb" x="217" y="510"/>
<use href="#mb" x="218" y="486"/>
<use href="#mb" x="218" y="512"/>
<use href="#mb" x="218" y="510"/>
<use href="#mb" x="219" y="509"/>
<use href="#mb" x="219" y="507"/>
<use href="#mb" x="220" y="510"/>
<use href="#mb" x="220" y="515"/>
<use href="#mb" x="221" y="513"/>
<use href="#mb" x="222" y="514"/>
<polyline points="117.8,263.8 118.2,275.4 118.8,331.0 120.3,347.0 120.3,380.3 120.3,399.4 121.1,404.2 121.1,420.2 121.1,430.2 122.3,440.4 124.7,452.1 125.2,466.5 125.7,467.0 126.2,469.2 126.7,474.7 127.2,467.8 127.7,472.0 128.2,480.6 128.7,458.9 129.2,465.3 129.7,473.6 130.2,475.2 130.7,474.9 131.2,472.1 131.7,479.3 132.2,478.4 132.7,475.0 133.2,490.3 133.7,482.3 134.2,478.2 134.7,481.6 135.2,481.7 135.7,483.5 136.2,472.7 136.7,482.8 137.2,491.8 137.7,479.9 138.2,486.4 138.7,492.5 139.2,492.3 139.7,496.1 140.2,479.7 140.7,486.4 141.2,486.6 141.7,491.4 142.2,493.8 142.7,478.1 143.2,494.0 143.7,481.7 143.8,468.0 144.2,492.3 144.7,481.7 144.8,462.0 145.2,490.0 145.6,470.0 145.7,495.1 146.2,488.6 146.7,490.4 147.2,493.5 147.7,490.4 148.2,489.4 148.7,497.4 149.2,493.8 149.7,490.7 150.2,499.1 150.7,490.4 151.2,498.0 151.7,495.5 152.2,497.5 152.7,499.5 153.2,498.1 153.7,499.6 154.2,492.9 154.7,493.1 155.2,500.0 155.6,488.3 155.7,495.1 156.2,495.0 156.7,493.7 157.2,502.4 157.7,500.9 158.2,503.3 158.7,495.8 159.2,498.8 159.7,495.3 160.2,501.1 160.7,503.0 161.2,492.8 161.7,504.1 162.2,500.7 162.7,494.7 163.2,485.5 163.7,501.8 164.2,494.1 164.7,491.2 165.2,495.9 165.7,495.7 166.2,500.9 166.7,488.3 167.0,486.0 167.2,498.7 167.7,500.2 168.2,499.8 168.7,491.6 169.2,488.7 169.4,484.4 169.7,497.1 170.2,493.1 170.4,484.0 170.7,494.4 171.2,502.0 171.7,495.0 172.2,487.0 172.7,496.9 173.2,490.9 173.7,505.3 174.2,504.1 174.7,500.8 180.7,505.1 181.2,508.4 181.7,503.9 182.2,509.5 182.7,502.7 183.2,508.1 183.7,510.3 184.2,510.9 184.7,499.7 185.2,507.3 185.7,493.8 186.2,497.7 186.4,486.0 186.7,493.4 186.9,490.0 187.2,508.3 187.7,497.2 188.2,503.3 188.7,502.6 189.2,503.6 189.7,501.0 190.2,505.2 190.7,513.1 191.2,504.8 191.7,507.5 192.2,510.0 192.7,504.4 193.2,499.4 193.7,503.1 194.2,511.3 194.2,525.0 194.7,497.9 195.2,503.1 195.7,510.9 196.2,509.9 196.7,506.0 197.2,509.9 197.4,485.0 197.7,506.8 198.2,500.2 198.7,498.2 199.2,502.6 199.7,510.1 200.2,502.7 200.7,500.9 201.2,501.4 201.7,497.6 202.2,504.6 202.5,492.0 202.7,499.7 203.2,507.7 203.7,495.8 204.2,508.3 204.7,503.9 205.2,497.9 205.7,511.3 206.2,507.6 206.7,503.0 207.2,508.2 207.7,513.2 208.2,511.6 208.7,515.5 209.2,515.4 209.7,515.1 210.2,514.0 210.7,517.2 211.2,515.1 211.7,514.4 212.0,496.0 212.2,506.4 212.4,485.5 212.7,515.8 212.8,500.0 213.2,517.1 213.7,512.1 214.2,511.5 214.7,519.1 215.2,507.4 215.7,514.3 216.2,519.1 216.7,509.7 217.2,514.7 217.7,518.4 218.2,512.0 218.5,487.8 218.7,514.0 219.2,515.0 219.7,509.2 220.2,478.3 220.2,511.9 220.6,441.6 220.7,513.4 221.0,490.0 221.2,515.4 221.7,513.0 222.2,512.9 222.7,510.6 223.2,513.3 223.7,518.2 224.2,516.7 225.0,517.3" fill="none" stroke="#A8743E" stroke-width="1.5" stroke-linejoin="round"/>
<path d="M213,553.2 H636.8" stroke="#966A30" stroke-width="2.8" fill="none" stroke-linecap="round"/>
<path d="M225.6,520.4 H636.8" stroke="#FFA850" stroke-width="2.8" fill="none" stroke-linecap="round"/>
<path d="M212.4,543.0 L219.6,543 L219.6,550.2 L235.5,550.2 L235.5,557.5 L243.7,557.5 L243.7,562.0 L251.4,562.0 L251.4,566.5 L260.3,566.5 L260.3,569.3 L268.5,569.3 L268.5,571.4 L276.9,571.4 L276.9,573.7 L285.2,573.7 L285.2,575.8 L293.6,575.8 L293.6,577.8 L302.0,577.8 L302.0,579.7 L310.4,579.7 L310.4,581.4 L318.7,581.4 L318.7,582.8 L327.1,582.8 L327.1,583.9 L335.5,583.9 L335.5,585.0 L343.8,585.0 L343.8,586.0 L352.2,586.0 L352.2,587.0 L360.6,587.0 L360.6,588.0 L369.0,588.0 L369.0,588.9 L377.3,588.9 L377.3,589.5 L385.7,589.5 L385.7,590.2 L394.1,590.2 L394.1,590.8 L402.4,590.8 L402.4,591.4 L410.8,591.4 L410.8,592.0 L419.2,592.0 L419.2,592.6 L427.5,592.6 L427.5,593.2 L435.9,593.2 L435.9,593.8 L444.3,593.8 L444.3,594.3 L452.7,594.3 L452.7,594.7 L461.0,594.7 L461.0,595.1 L469.4,595.1 L469.4,595.5 L477.8,595.5 L477.8,595.9 L486.1,595.9 L486.1,596.3 L494.5,596.3 L494.5,596.7 L502.9,596.7 L502.9,597.1 L511.3,597.1 L511.3,597.4 L519.6,597.4 L519.6,597.6 L528.0,597.6 L528.0,597.8 L536.4,597.8 L536.4,598.0 L544.7,598.0 L544.7,598.2 L553.1,598.2 L553.1,598.5 L561.5,598.5 L561.5,598.7 L569.8,598.7 L569.8,598.9 L578.2,598.9 L578.2,599.1 L586.6,599.1 L586.6,599.3 L595.0,599.3 L595.0,599.5 L603.3,599.5 L603.3,599.7 L611.7,599.7 L611.7,599.8 L620.1,599.8 L620.1,600.0 L628.4,600.0 L628.4,600.2 L637.0,600.2" stroke="#A82A08" stroke-width="2.8" fill="none" stroke-linejoin="miter" stroke-linecap="round"/>
<path d="M225.7,552.5 L225.7,559.0 L233.5,559.0 L233.5,563.3 L240.8,563.3 L240.8,567.1 L247.7,567.1 L247.7,569.3 L255.9,569.3 L255.9,571.4 L262.4,571.4 L262.4,573.2 L270.8,573.2 L270.8,575.4 L279.1,575.4 L279.1,577.4 L287.5,577.4 L287.5,579.3 L295.9,579.3 L295.9,581.0 L304.3,581.0 L304.3,582.5 L312.6,582.5 L312.6,583.7 L321.0,583.7 L321.0,584.7 L329.4,584.7 L329.4,585.8 L337.7,585.8 L337.7,586.8 L346.1,586.8 L346.1,587.8 L354.5,587.8 L354.5,588.8 L362.9,588.8 L362.9,589.4 L371.2,589.4 L371.2,590.0 L379.6,590.0 L379.6,590.6 L388.0,590.6 L388.0,591.2 L396.3,591.2 L396.3,591.9 L404.7,591.9 L404.7,592.5 L413.1,592.5 L413.1,593.1 L421.4,593.1 L421.4,593.7 L429.8,593.7 L429.8,594.2 L438.2,594.2 L438.2,594.6 L446.6,594.6 L446.6,595.0 L454.9,595.0 L454.9,595.4 L463.3,595.4 L463.3,595.8 L471.7,595.8 L471.7,596.2 L480.0,596.2 L480.0,596.6 L488.4,596.6 L488.4,597.0 L496.8,597.0 L496.8,597.3 L505.2,597.3 L505.2,597.5 L513.5,597.5 L513.5,597.8 L521.9,597.8 L521.9,598.0 L530.3,598.0 L530.3,598.2 L538.6,598.2 L538.6,598.4 L547.0,598.4 L547.0,598.6 L555.4,598.6 L555.4,598.8 L563.7,598.8 L563.7,599.1 L572.1,599.1 L572.1,599.2 L580.5,599.2 L580.5,599.4 L588.9,599.4 L588.9,599.6 L597.2,599.6 L597.2,599.8 L605.6,599.8 L605.6,600.0 L614.0,600.0 L614.0,600.2 L622.3,600.2 L622.3,600.4 L630.7,600.4 L630.7,600.5 L637.0,600.5" stroke="#C80C08" stroke-width="3" fill="none" stroke-linejoin="miter" stroke-linecap="round"/>
<path d="M644.3,598.6 l1.7,1.9 l-1.7,1.9 l-1.7,-1.9z" fill="#C80000"/>
<use href="#mr" x="115" y="340"/>
<use href="#mr" x="116" y="272"/>
<use href="#mr" x="116" y="144"/>
<use href="#mr" x="116" y="91"/>
<use href="#mr" x="116" y="138"/>
<use href="#mr" x="116" y="236"/>
<use href="#mr" x="117" y="308"/>
<use href="#mr" x="117" y="163"/>
<use href="#mr" x="118" y="229"/>
<use href="#mr" x="118" y="261"/>
<use href="#mr" x="118" y="293"/>
<use href="#mr" x="119" y="323"/>
<use href="#mr" x="119" y="354"/>
<use href="#mr" x="119" y="361"/>
<use href="#mr" x="120" y="365"/>
<use href="#mr" x="120" y="374"/>
<use href="#mr" x="120" y="399"/>
<use href="#mr" x="124" y="403"/>
<use href="#mr" x="123" y="412"/>
<use href="#mr" x="124" y="417"/>
<use href="#mr" x="126" y="424"/>
<use href="#mr" x="127" y="431"/>
<use href="#mr" x="127" y="438"/>
<use href="#mr" x="128" y="439"/>
<use href="#mr" x="128" y="438"/>
<use href="#mr" x="129" y="446"/>
<use href="#mr" x="129" y="440"/>
<use href="#mr" x="130" y="448"/>
<use href="#mr" x="130" y="447"/>
<use href="#mr" x="131" y="444"/>
<use href="#mr" x="131" y="452"/>
<use href="#mr" x="132" y="453"/>
<use href="#mr" x="132" y="446"/>
<use href="#mr" x="132" y="519"/>
<use href="#mr" x="132" y="455"/>
<use href="#mr" x="132" y="453"/>
<use href="#mr" x="133" y="450"/>
<use href="#mr" x="133" y="451"/>
<use href="#mr" x="134" y="457"/>
<use href="#mr" x="134" y="464"/>
<use href="#mr" x="135" y="456"/>
<use href="#mr" x="135" y="458"/>
<use href="#mr" x="136" y="465"/>
<use href="#mr" x="136" y="431"/>
<use href="#mr" x="136" y="471"/>
<use href="#mr" x="137" y="467"/>
<use href="#mr" x="137" y="441"/>
<use href="#mr" x="137" y="466"/>
<use href="#mr" x="138" y="475"/>
<use href="#mr" x="138" y="463"/>
<use href="#mr" x="139" y="475"/>
<use href="#mr" x="139" y="468"/>
<use href="#mr" x="140" y="467"/>
<use href="#mr" x="140" y="468"/>
<use href="#mr" x="141" y="476"/>
<use href="#mr" x="141" y="471"/>
<use href="#mr" x="141" y="520"/>
<use href="#mr" x="141" y="476"/>
<use href="#mr" x="141" y="480"/>
<use href="#mr" x="142" y="472"/>
<use href="#mr" x="142" y="478"/>
<use href="#mr" x="143" y="480"/>
<use href="#mr" x="143" y="477"/>
<use href="#mr" x="144" y="480"/>
<use href="#mr" x="144" y="474"/>
<use href="#mr" x="145" y="475"/>
<use href="#mr" x="145" y="478"/>
<use href="#mr" x="146" y="485"/>
<use href="#mr" x="146" y="482"/>
<use href="#mr" x="147" y="482"/>
<use href="#mr" x="147" y="486"/>
<use href="#mr" x="148" y="470"/>
<use href="#mr" x="148" y="485"/>
<use href="#mr" x="148" y="507"/>
<use href="#mr" x="148" y="534"/>
<use href="#mr" x="148" y="484"/>
<use href="#mr" x="149" y="491"/>
<use href="#mr" x="149" y="491"/>
<use href="#mr" x="150" y="487"/>
<use href="#mr" x="150" y="491"/>
<use href="#mr" x="151" y="492"/>
<use href="#mr" x="151" y="496"/>
<use href="#mr" x="152" y="495"/>
<use href="#mr" x="152" y="491"/>
<use href="#mr" x="153" y="499"/>
<use href="#mr" x="153" y="490"/>
<use href="#mr" x="154" y="494"/>
<use href="#mr" x="154" y="499"/>
<use href="#mr" x="155" y="493"/>
<use href="#mr" x="155" y="497"/>
<use href="#mr" x="155" y="496"/>
<use href="#mr" x="156" y="520"/>
<use href="#mr" x="156" y="493"/>
<use href="#mr" x="156" y="497"/>
<use href="#mr" x="156" y="500"/>
<use href="#mr" x="157" y="502"/>
<use href="#mr" x="157" y="500"/>
<use href="#mr" x="158" y="504"/>
<use href="#mr" x="158" y="499"/>
<use href="#mr" x="159" y="504"/>
<use href="#mr" x="159" y="504"/>
<use href="#mr" x="160" y="504"/>
<use href="#mr" x="160" y="512"/>
<use href="#mr" x="160" y="503"/>
<use href="#mr" x="161" y="508"/>
<use href="#mr" x="161" y="510"/>
<use href="#mr" x="162" y="506"/>
<use href="#mr" x="162" y="508"/>
<use href="#mr" x="163" y="503"/>
<use href="#mr" x="163" y="510"/>
<use href="#mr" x="164" y="510"/>
<use href="#mr" x="164" y="514"/>
<use href="#mr" x="165" y="513"/>
<use href="#mr" x="165" y="509"/>
<use href="#mr" x="166" y="510"/>
<use href="#mr" x="166" y="514"/>
<use href="#mr" x="167" y="509"/>
<use href="#mr" x="167" y="513"/>
<use href="#mr" x="168" y="511"/>
<use href="#mr" x="168" y="512"/>
<use href="#mr" x="168" y="518"/>
<use href="#mr" x="169" y="512"/>
<use href="#mr" x="169" y="519"/>
<use href="#mr" x="170" y="510"/>
<use href="#mr" x="170" y="514"/>
<use href="#mr" x="170" y="516"/>
<use href="#mr" x="171" y="518"/>
<use href="#mr" x="171" y="523"/>
<use href="#mr" x="172" y="528"/>
<use href="#mr" x="172" y="516"/>
<use href="#mr" x="172" y="520"/>
<use href="#mr" x="180" y="530"/>
<use href="#mr" x="181" y="547"/>
<use href="#mr" x="181" y="549"/>
<use href="#mr" x="181" y="524"/>
<use href="#mr" x="182" y="524"/>
<use href="#mr" x="182" y="526"/>
<use href="#mr" x="182" y="526"/>
<use href="#mr" x="182" y="535"/>
<use href="#mr" x="183" y="538"/>
<use href="#mr" x="183" y="536"/>
<use href="#mr" x="183" y="528"/>
<use href="#mr" x="183" y="565"/>
<use href="#mr" x="183" y="518"/>
<use href="#mr" x="183" y="519"/>
<use href="#mr" x="183" y="532"/>
<use href="#mr" x="183" y="533"/>
<use href="#mr" x="184" y="531"/>
<use href="#mr" x="184" y="538"/>
<use href="#mr" x="184" y="550"/>
<use href="#mr" x="184" y="542"/>
<use href="#mr" x="185" y="536"/>
<use href="#mr" x="185" y="540"/>
<use href="#mr" x="185" y="542"/>
<use href="#mr" x="185" y="522"/>
<use href="#mr" x="186" y="549"/>
<use href="#mr" x="186" y="545"/>
<use href="#mr" x="186" y="548"/>
<use href="#mr" x="186" y="546"/>
<use href="#mr" x="187" y="533"/>
<use href="#mr" x="187" y="533"/>
<use href="#mr" x="187" y="524"/>
<use href="#mr" x="188" y="541"/>
<use href="#mr" x="188" y="523"/>
<use href="#mr" x="188" y="554"/>
<use href="#mr" x="188" y="523"/>
<use href="#mr" x="188" y="528"/>
<use href="#mr" x="189" y="526"/>
<use href="#mr" x="189" y="532"/>
<use href="#mr" x="189" y="523"/>
<use href="#mr" x="189" y="521"/>
<use href="#mr" x="190" y="526"/>
<use href="#mr" x="190" y="525"/>
<use href="#mr" x="190" y="533"/>
<use href="#mr" x="190" y="522"/>
<use href="#mr" x="191" y="550"/>
<use href="#mr" x="191" y="536"/>
<use href="#mr" x="191" y="594"/>
<use href="#mr" x="191" y="532"/>
<use href="#mr" x="192" y="540"/>
<use href="#mr" x="192" y="534"/>
<use href="#mr" x="193" y="601"/>
<use href="#mr" x="193" y="526"/>
<use href="#mr" x="194" y="508"/>
<use href="#mr" x="194" y="443"/>
<use href="#mr" x="194" y="470"/>
<use href="#mr" x="194" y="476"/>
<use href="#mr" x="195" y="482"/>
<use href="#mr" x="195" y="494"/>
<use href="#mr" x="196" y="502"/>
<use href="#mr" x="196" y="508"/>
<use href="#mr" x="197" y="514"/>
<use href="#mr" x="198" y="519"/>
<use href="#mr" x="198" y="537"/>
<use href="#mr" x="198" y="561"/>
<use href="#mr" x="198" y="522"/>
<use href="#mr" x="199" y="526"/>
<use href="#mr" x="200" y="528"/>
<use href="#mr" x="201" y="530"/>
<use href="#mr" x="202" y="534"/>
<use href="#mr" x="202" y="595"/>
<use href="#mr" x="205" y="537"/>
<use href="#mr" x="208" y="538"/>
<use href="#mr" x="208" y="601"/>
<use href="#mr" x="209" y="559"/>
<use href="#mr" x="209" y="530"/>
<use href="#mr" x="210" y="542"/>
<use href="#mr" x="210" y="551"/>
<use href="#mr" x="211" y="601"/>
<use href="#mr" x="211" y="546"/>
<use href="#mr" x="212" y="542"/>
<use href="#mr" x="212" y="544"/>
<use href="#mr" x="214" y="548"/>
<use href="#mr" x="215" y="562"/>
<use href="#mr" x="216" y="544"/>
<use href="#mr" x="217" y="530"/>
<use href="#mr" x="217" y="593"/>
<use href="#mr" x="217" y="568"/>
<use href="#mr" x="217" y="542"/>
<use href="#mr" x="218" y="546"/>
<use href="#mr" x="219" y="542"/>
<use href="#mr" x="220" y="546"/>
<use href="#mr" x="221" y="557"/>
<use href="#mr" x="222" y="548"/>
<use href="#mr" x="222" y="601"/>
<polyline points="118.2,343.2 119.3,275.4 119.5,147.0 119.5,94.1 119.6,141.2 119.7,240.0 120.3,311.5 120.5,166.3 121.0,232.3 121.6,264.4 122.0,296.2 122.9,326.3 122.5,357.2 122.5,364.4 123.8,368.5 123.8,377.9 124.0,402.3 127.6,406.6 126.5,415.0 127.7,420.5 129.8,427.4 130.5,434.3 130.8,441.1 131.3,442.4 131.8,441.5 132.3,450.0 132.8,443.4 133.3,451.4 133.8,450.5 134.3,447.6 134.8,455.2 135.1,456.8 135.3,450.0 135.3,522.3 135.6,458.8 135.8,456.9 136.3,453.1 136.8,454.7 137.3,460.7 137.8,467.6 138.3,459.0 138.8,461.6 139.3,468.5 139.6,434.3 139.8,474.3 140.3,470.3 140.4,444.1 140.8,469.1 141.3,478.3 141.8,466.3 142.3,478.6 142.8,471.7 143.3,470.6 143.8,471.2 144.1,479.5 144.3,474.9 144.3,524.0 144.6,479.8 144.8,483.0 145.3,475.0 145.8,481.4 146.3,483.0 146.8,480.1 147.3,483.3 147.8,477.4 148.3,478.1 148.8,481.0 149.3,488.4 149.8,485.7 150.3,485.5 150.8,489.4 151.2,473.4 151.3,488.8 151.4,510.4 151.6,537.3 151.8,488.0 152.3,494.4 152.8,494.2 153.3,490.1 153.8,494.7 154.3,495.0 154.8,499.8 155.3,498.9 155.8,494.6 156.3,502.8 156.8,494.0 157.3,497.9 157.8,502.2 158.3,496.1 158.8,500.4 158.9,499.7 159.2,524.0 159.3,496.1 159.4,500.5 159.8,503.6 160.3,505.3 160.8,503.9 161.3,508.0 161.8,502.5 162.3,507.4 162.8,507.0 163.3,507.5 163.7,515.4 163.8,506.8 164.3,511.8 164.8,513.6 165.3,509.2 165.8,511.6 166.3,506.9 166.8,513.3 167.3,513.5 167.8,517.4 168.3,516.5 168.8,512.4 169.3,514.0 169.8,517.2 170.3,512.1 170.8,516.8 171.3,514.8 171.8,515.1 172.0,521.0 172.3,515.3 172.8,522.3 173.2,514.0 173.3,517.3 173.8,519.0 174.3,521.0 174.8,526.1 175.2,531.5 175.3,519.5 175.8,523.3 184.0,533.5 184.3,550.4 184.5,552.8 184.8,527.1 185.0,528.0 185.3,529.8 185.6,529.9 185.8,538.1 186.1,541.5 186.2,540.0 186.3,531.1 186.4,568.3 186.6,521.1 186.6,522.9 186.6,535.0 186.9,536.3 187.1,534.8 187.4,541.1 187.6,553.6 187.9,545.3 188.2,539.7 188.4,543.1 188.7,545.0 188.9,525.2 189.2,552.3 189.5,548.6 189.7,551.7 190.0,549.3 190.2,536.4 190.5,536.7 190.8,527.3 191.0,544.4 191.3,526.2 191.3,557.5 191.5,526.4 191.8,531.0 192.1,529.6 192.3,535.4 192.6,526.3 192.8,524.7 193.1,529.6 193.4,528.1 193.6,536.5 193.9,525.8 194.1,553.0 194.4,540.0 194.6,597.4 194.8,535.0 195.6,543.0 196.0,538.0 196.2,604.5 196.5,530.0 197.4,512.0 197.6,446.3 197.8,473.0 198.0,479.7 198.2,485.3 198.6,498.0 199.2,505.6 199.6,512.0 200.3,517.0 201.1,522.5 201.4,540.4 201.6,564.6 201.9,526.0 202.6,529.0 203.5,531.0 204.4,534.0 205.0,537.0 205.4,598.4 208.2,540.4 211.8,541.3 212.0,604.5 212.3,562.2 212.4,533.0 212.6,604.5 213.0,545.0 213.4,604.5 213.8,554.7 214.3,604.5 214.8,550.0 215.2,545.0 215.5,604.5 216.0,548.0 217.2,552.0 218.5,565.0 219.2,548.0 220.2,533.8 220.4,596.5 220.5,571.1 220.8,546.0 221.8,549.0 222.7,545.0 223.6,550.0 224.6,560.3 225.2,551.0 225.5,604.6" fill="none" stroke="#CC0000" stroke-width="1.7" stroke-linejoin="round"/>
</g></svg>
<rect x="502" y="69" width="161" height="129" fill="#000"/><rect x="503" y="70" width="158" height="127" fill="#fff"/><rect x="502" y="68" width="161" height="1" fill="#555"/>
<text x="582" y="88" font-size="16.1" text-anchor="middle" fill="#000">Legend</text>
<rect x="506" y="100.0" width="32.5" height="1" fill="#A8743E"/><circle cx="522.5" cy="100.5" r="4" fill="#A8743E" stroke="#000" stroke-width="1" shape-rendering="crispEdges"/>
<text x="545.3" y="104.3" font-size="11.3" fill="#000" textLength="93.2" lengthAdjust="spacingAndGlyphs">History Pressure</text>
<rect x="506" y="116.9" width="32.5" height="1.2" fill="#CC0000"/><path d="M522.5,113.5 l4,4 l-4,4 l-4,-4z" fill="#CC0000" stroke="#000" stroke-width="1" shape-rendering="crispEdges"/>
<text x="545.3" y="121.3" font-size="11.3" fill="#000" textLength="89.5" lengthAdjust="spacingAndGlyphs">History Gas Rate</text>
<path d="M506.3,134.5 H538.8" stroke="#FFA850" stroke-width="3" stroke-linecap="round"/>
<text x="545.3" y="138.3" font-size="11.3" fill="#000" textLength="111.3" lengthAdjust="spacingAndGlyphs">Forecast 1 Pressure</text>
<path d="M506.3,151.5 H538.8" stroke="#A82A08" stroke-width="3" stroke-linecap="round"/>
<text x="545.3" y="155.3" font-size="11.3" fill="#000" textLength="107.2" lengthAdjust="spacingAndGlyphs">Forecast 1 Gas Rate</text>
<path d="M506.3,168.5 H538.8" stroke="#966A30" stroke-width="3" stroke-linecap="round"/>
<text x="545.3" y="172.3" font-size="11.3" fill="#000" textLength="111.3" lengthAdjust="spacingAndGlyphs">Forecast 1 Pressure</text>
<path d="M506.3,185.5 H538.8" stroke="#C80808" stroke-width="3" stroke-linecap="round"/>
<text x="545.3" y="189.3" font-size="11.3" fill="#000" textLength="107.2" lengthAdjust="spacingAndGlyphs">Forecast 1 Gas Rate</text>
</svg></body></html>
